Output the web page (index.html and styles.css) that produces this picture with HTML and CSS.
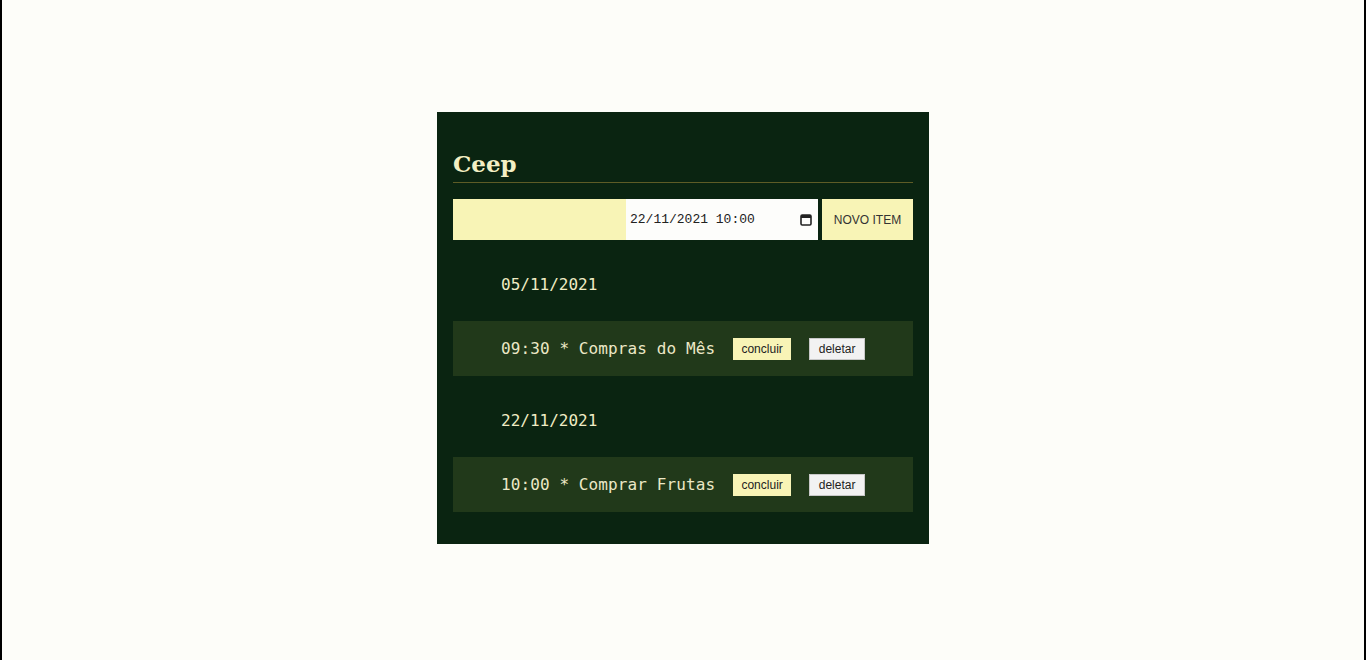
FILE: index.html
```html
<!DOCTYPE html>
<html lang="pt-BR">
<head>
<meta charset="utf-8">
<title>Ceep</title>
<link rel="stylesheet" href="styles.css">
</head>
<body>
<div class="page">
  <main class="panel">
    <h1 class="title">Ceep</h1>
    <form class="form">
      <input class="text-input" type="text" value="">
      <div class="date-input">
        <span class="date-value">22/11/2021 10:00</span>
        <svg class="cal" width="12" height="13" viewBox="0 0 12 13"><rect x="1" y="2" width="10" height="10" rx="1.2" fill="none" stroke="#222" stroke-width="1.6"/><rect x="1" y="2" width="10" height="3" fill="#222"/></svg>
      </div>
      <button class="add-btn" type="button">NOVO ITEM</button>
    </form>
    <section class="group">
      <div class="date-head">05/11/2021</div>
      <div class="item">
        <span class="item-text">09:30 * Compras do Mês</span>
        <button class="btn btn-done" type="button">concluir</button>
        <button class="btn btn-del" type="button">deletar</button>
      </div>
    </section>
    <section class="group">
      <div class="date-head">22/11/2021</div>
      <div class="item">
        <span class="item-text">10:00 * Comprar Frutas</span>
        <button class="btn btn-done" type="button">concluir</button>
        <button class="btn btn-del" type="button">deletar</button>
      </div>
    </section>
  </main>
</div>
</body>
</html>
```
FILE: styles.css
```css
html, body {
  margin: 0;
  padding: 0;
}
body {
  background: #fdfdf9;
  font-family: "DejaVu Sans Mono", monospace;
}
.page {
  box-sizing: border-box;
  height: 660px;
  border-left: 2px solid #000;
  border-right: 2px solid #000;
  padding-top: 112px;
  display: flex;
  justify-content: center;
  align-items: flex-start;
}
.panel {
  width: 460px;
  background: #0a2411;
  padding: 0 16px 32px;
}
.title {
  margin: 0;
  padding-top: 38px;
  padding-bottom: 4px;
  font-family: "DejaVu Serif", serif;
  font-weight: bold;
  font-size: 23px;
  line-height: 28px;
  color: #f3efc4;
  border-bottom: 1px solid #5e5c26;
}
.form {
  display: flex;
  align-items: stretch;
  margin-top: 16px;
  height: 41px;
}
.text-input {
  box-sizing: border-box;
  width: 173px;
  height: 41px;
  margin: 0;
  border: none;
  background: #f8f4b6;
  outline: none;
}
.date-input {
  box-sizing: border-box;
  width: 192px;
  height: 41px;
  background: #fdfdfb;
  display: flex;
  align-items: center;
  justify-content: space-between;
  padding: 0 6px 0 4px;
}
.date-value {
  font-family: "Liberation Mono", monospace;
  font-size: 13px;
  color: #222;
}
.cal {
  display: block;
}
.add-btn {
  box-sizing: border-box;
  width: 91px;
  height: 41px;
  margin-left: 4px;
  border: none;
  background: #f8f4b6;
  font-family: "Liberation Sans", Arial, sans-serif;
  font-size: 12px;
  color: #333;
  padding: 0;
}
.group {
  margin-top: 35px;
}
.date-head {
  padding-left: 48px;
  font-size: 16px;
  line-height: 20px;
  color: #f0ecc4;
}
.item {
  margin-top: 26px;
  height: 55px;
  background: #21391a;
  display: flex;
  align-items: center;
  padding-left: 48px;
}
.item-text {
  font-size: 16px;
  letter-spacing: 0.1px;
  color: #ece8c6;
  margin-right: 18px;
}
.btn {
  box-sizing: border-box;
  height: 22px;
  font-family: "Liberation Sans", Arial, sans-serif;
  font-size: 12px;
  color: #222;
  padding: 0 7px;
  border: none;
}
.btn-done {
  width: 58px;
  background: #f8f4b6;
  margin-right: 18px;
}
.btn-del {
  width: 56px;
  background: #f2f2f2;
  border: 1px solid #c8c8c8;
}
```
